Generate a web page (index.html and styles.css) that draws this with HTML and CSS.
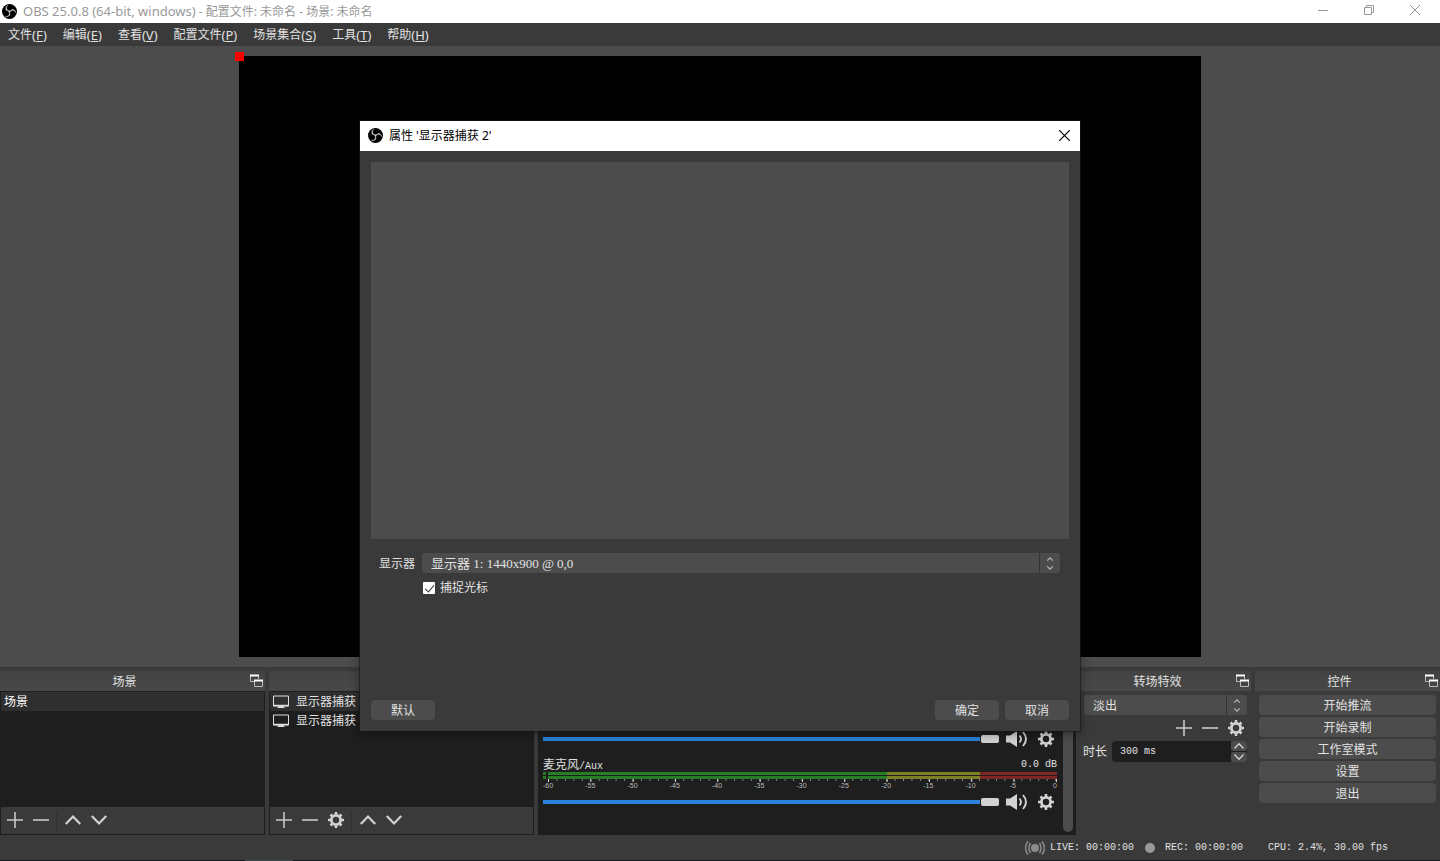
FILE: index.html
```html
<!DOCTYPE html>
<html lang="zh-CN">
<head>
<meta charset="utf-8">
<title>OBS 25.0.8</title>
<link rel="stylesheet" href="styles.css">
</head>
<body>
<svg class="sprite" aria-hidden="true">
  <symbol id="obs" viewBox="0 0 24 24"><circle cx="12" cy="12" r="12" fill="#000"/><path fill="#ddd" stroke="#ccc" stroke-width=".8" d="M6.182 5.99c.352-1.698 1.503-3.229 3.05-3.996-.269.273-.595.483-.844.78-1.02 1.1-1.48 2.692-1.199 4.156.355 2.235 2.455 4.06 4.732 4.028 1.765.079 3.485-.937 4.348-2.468 1.848.063 3.645 1.017 4.7 2.548.54.799.962 1.736.991 2.711-.342-1.295-1.202-2.446-2.375-3.095-1.135-.639-2.529-.802-3.772-.425-1.56.448-2.849 1.723-3.293 3.293-.377 1.25-.216 2.628.377 3.772-.825 1.429-2.315 2.449-3.932 2.756-1.244.261-2.551.059-3.709-.464 1.036.302 2.161.355 3.191-.011 1.381-.457 2.522-1.567 3.024-2.935.556-1.49.345-3.261-.591-4.54-.7-1.007-1.803-1.717-3.002-1.969-.38-.068-.764-.098-1.148-.134-.611-1.231-.834-2.66-.528-3.996z"/></symbol>
  <symbol id="plus" viewBox="0 0 16 16"><path d="M8 0v16M0 8h16" stroke="#c8c8c8" stroke-width="1.6"/></symbol>
  <symbol id="minus" viewBox="0 0 16 16"><path d="M0 8h16" stroke="#c8c8c8" stroke-width="1.6"/></symbol>
  <symbol id="up" viewBox="0 0 16 16"><path d="M.8 12 8 4.500 15.200 12" fill="none" stroke="#d2d2d2" stroke-width="2.200"/></symbol>
  <symbol id="down" viewBox="0 0 16 16"><path d="M.8 4 8 11.500 15.200 4" fill="none" stroke="#d2d2d2" stroke-width="2.200"/></symbol>
  <symbol id="gear" viewBox="0 0 16 16"><circle cx="8" cy="8" r="4.600" fill="none" stroke="#d2d2d2" stroke-width="2.800"/><g stroke="#d2d2d2" stroke-width="2.600"><path d="M8 0v3M8 13v3M0 8h3M13 8h3"/><path d="m2.500 2.500 2 2M11.500 11.500l2 2M13.500 2.500l-2 2M4.500 11.500l-2 2"/></g></symbol>
  <symbol id="float" viewBox="0 0 14 14"><path d="M5 7.500H1.500V1.500H9.500V5" fill="none" stroke="#bbb"/><path d="M1 1.500h9" stroke="#fff" stroke-width="2"/><path d="M5.500 6.500h8v6h-8z" fill="#454545" stroke="#bbb"/><path d="M5 6.500h9" stroke="#fff" stroke-width="2"/></symbol>
  <symbol id="monitor" viewBox="0 0 16 14"><path d="M.5 1h15v10H.5z" fill="none" stroke="#ddd"/><path d="M0 10.500h16" stroke="#ddd" stroke-width="1.500"/><path d="M6 11h4l2 2H4z" fill="#ddd"/></symbol>
  <symbol id="speaker" viewBox="0 0 22 16"><path d="M0 4.500h4L11 0v16L4 11.500H0z" fill="#d2d2d2"/><path d="M13.500 4.500q3 3.500 0 7M17 1q6 7 0 14" fill="none" stroke="#d2d2d2" stroke-width="1.900"/></symbol>
  <symbol id="spinpair" viewBox="0 0 8 16"><path d="M1 5 4 2l3 3M1 11l3 3 3-3" fill="none" stroke="#bbb" stroke-width="1.200"/></symbol>
</svg>

<header class="titlebar">
  <svg class="logo"><use href="#obs"/></svg>
  <h1 class="title"><span class="latin">OBS 25.0.8 (64-bit, windows)</span> - 配置文件: 未命名 - 场景: 未命名</h1>
  <div class="window-buttons">
    <button aria-label="最小化"><svg viewBox="0 0 10 10"><path d="M0 5.500h10" stroke="#999"/></svg></button>
    <button aria-label="还原"><svg viewBox="0 0 10 10"><path d="M.5 2.500h7v7h-7zM2.500 2V.5h7v7H8" fill="none" stroke="#999"/></svg></button>
    <button aria-label="关闭"><svg viewBox="0 0 10 10"><path d="m0 0 10 10M10 0 0 10" stroke="#999"/></svg></button>
  </div>
</header>

<nav class="menubar">
  <button>文件<span class="latin">(<u>F</u>)</span></button><button>编辑<span class="latin">(<u>E</u>)</span></button><button>查看<span class="latin">(<u>V</u>)</span></button><button>配置文件<span class="latin">(<u>P</u>)</span></button><button>场景集合<span class="latin">(<u>S</u>)</span></button><button>工具<span class="latin">(<u>T</u>)</span></button><button>帮助<span class="latin">(<u>H</u>)</span></button>
</nav>

<main class="preview"><div class="canvas"><span class="handle"></span></div></main>

<section class="docks">
  <article class="dock">
    <header class="dock-head"><h2>场景</h2><button aria-label="浮动"><svg><use href="#float"/></svg></button></header>
    <div class="box">
      <ul class="list"><li class="row selected scene">场景</li></ul>
      <div class="tools">
        <button aria-label="添加"><svg><use href="#plus"/></svg></button>
        <button aria-label="移除"><svg><use href="#minus"/></svg></button>
        <span class="sep"></span>
        <button aria-label="上移"><svg><use href="#up"/></svg></button>
        <button aria-label="下移"><svg><use href="#down"/></svg></button>
      </div>
    </div>
  </article>

  <article class="dock">
    <header class="dock-head"></header>
    <div class="box">
      <ul class="list">
        <li class="row selected"><svg class="monitor"><use href="#monitor"/></svg>显示器捕获</li>
        <li class="row"><svg class="monitor"><use href="#monitor"/></svg>显示器捕获</li>
      </ul>
      <div class="tools">
        <button aria-label="添加"><svg><use href="#plus"/></svg></button>
        <button aria-label="移除"><svg><use href="#minus"/></svg></button>
        <button aria-label="属性"><svg><use href="#gear"/></svg></button>
        <span class="sep"></span>
        <button aria-label="上移"><svg><use href="#up"/></svg></button>
        <button aria-label="下移"><svg><use href="#down"/></svg></button>
      </div>
    </div>
  </article>

  <article class="dock">
    <header class="dock-head"></header>
    <div class="mixer">
      <div class="channels">
        <div class="volume">
          <input type="range" value="100" aria-label="音量">
          <button class="mute" aria-label="静音"><svg><use href="#speaker"/></svg></button>
          <button class="cog" aria-label="设置"><svg><use href="#gear"/></svg></button>
        </div>
        <div class="channel-head"><label for="mic">麦克风<span class="mono">/Aux</span></label><span class="mono">0.0 dB</span></div>
        <div class="meter"><i></i><b></b><i></i><b></b></div>
        <div class="ticks"></div>
        <div class="scale"><span>-60</span><span>-55</span><span>-50</span><span>-45</span><span>-40</span><span>-35</span><span>-30</span><span>-25</span><span>-20</span><span>-15</span><span>-10</span><span>-5</span><span>0</span></div>
        <div class="volume">
          <input id="mic" type="range" value="100">
          <button class="mute" aria-label="静音"><svg><use href="#speaker"/></svg></button>
          <button class="cog" aria-label="设置"><svg><use href="#gear"/></svg></button>
        </div>
      </div>
      <div class="scrollbar"></div>
    </div>
  </article>

  <article class="dock">
    <header class="dock-head"><h2>转场特效</h2><button aria-label="浮动"><svg><use href="#float"/></svg></button></header>
    <div class="panel">
      <div class="combo"><select aria-label="转场特效"><option>淡出</option></select><svg><use href="#spinpair"/></svg></div>
      <div class="tools end">
        <button aria-label="添加"><svg><use href="#plus"/></svg></button>
        <button aria-label="移除"><svg><use href="#minus"/></svg></button>
        <button aria-label="属性"><svg><use href="#gear"/></svg></button>
      </div>
      <div class="duration">
        <label for="duration">时长</label>
        <div class="spin">
          <input id="duration" type="text" value="300 ms">
          <div class="steps"><button aria-label="增加"><svg><use href="#up"/></svg></button><button aria-label="减少"><svg><use href="#down"/></svg></button></div>
        </div>
      </div>
    </div>
  </article>

  <article class="dock">
    <header class="dock-head"><h2>控件</h2><button aria-label="浮动"><svg><use href="#float"/></svg></button></header>
    <div class="panel controls">
      <button class="btn">开始推流</button><button class="btn">开始录制</button><button class="btn">工作室模式</button><button class="btn">设置</button><button class="btn">退出</button>
    </div>
  </article>
</section>

<footer class="status mono">
  <span class="live"><svg viewBox="0 0 20 14"><circle cx="10" cy="7" r="4" fill="#8c8c8c"/><path d="M5.500 2q-3 5 0 10M14.500 2q3 5 0 10M3 .5q-5 6.500 0 13M17 .5q5 6.500 0 13" fill="none" stroke="#8c8c8c" stroke-width="1.500"/></svg>LIVE: 00:00:00</span>
  <span class="rec"><i></i>REC: 00:00:00</span>
  <span>CPU: 2.4%, 30.00 fps</span>
</footer>
<div class="taskbar"><span></span></div>

<dialog open class="dialog" aria-labelledby="dialog-title">
  <header class="dialog-head">
    <svg class="logo"><use href="#obs"/></svg>
    <h2 id="dialog-title">属性 '显示器捕获 2'</h2>
    <button aria-label="关闭"><svg viewBox="0 0 10 10"><path d="m0 0 10 10M10 0 0 10" stroke="#000" stroke-width="1.100"/></svg></button>
  </header>
  <div class="dialog-body">
    <div class="dialog-preview"></div>
    <form class="form">
      <label for="display">显示器</label>
      <div class="combo wide"><select id="display"><option>显示器 1: 1440x900 @ 0,0</option></select><svg><use href="#spinpair"/></svg></div>
      <label class="check"><input type="checkbox" checked><span>捕捉光标</span></label>
    </form>
    <div class="actions"><button class="btn">默认</button><button class="btn ok">确定</button><button class="btn">取消</button></div>
  </div>
</dialog>
</body>
</html>
```
FILE: styles.css
```css
* { box-sizing: border-box; }
body {
  margin: 0;
  min-height: 100vh;
  display: flex;
  flex-direction: column;
  position: relative;
  background: #3a3a3a;
  color: #e1e1e1;
  font: 12px/18px "Liberation Sans", "Noto Sans CJK SC", sans-serif;
}
h1, h2, ul { margin: 0; padding: 0; font: inherit; }
ul { list-style: none; }
button, input, select { font: inherit; color: inherit; margin: 0; }
button { background: none; border: 0; padding: 0; display: flex; align-items: center; justify-content: center; }
svg { display: block; }
.sprite { position: absolute; width: 0; height: 0; }
.mono, .spin input { font-family: "Liberation Mono", monospace; font-size: 10px; }
.latin { font-size: 13px; }

.titlebar { display: flex; align-items: center; height: 23px; padding-left: 2px; gap: 6px; background: #fff; color: #999; }
.logo { width: 15px; height: 15px; flex: none; }
.title { font-family: "Noto Sans", "Noto Sans CJK SC", sans-serif; }
.window-buttons { margin-left: auto; display: flex; align-self: flex-start; padding-right: 2px; }
.window-buttons button { width: 46px; height: 20px; }
.window-buttons svg { width: 10px; height: 10px; }

.menubar { display: flex; height: 23px; background: #3a3a3a; font-family: "Noto Sans", "Noto Sans CJK SC", sans-serif; }
.menubar button { padding: 0 8px; }
.menubar u { text-underline-offset: 1px; }

.preview { flex: 1; min-height: 200px; display: flex; justify-content: center; padding: 10px; background: #4c4c4c; }
.canvas { position: relative; width: 67.7%; background: #000; }
.handle { position: absolute; left: -4px; top: -4px; width: 9px; height: 9px; background: #f00; }

.docks { display: grid; grid-template-columns: 265fr 265fr 538fr 171fr 185fr; gap: 4px; padding-top: 4px; }
.dock { display: flex; flex-direction: column; min-width: 0; }
.dock-head { display: flex; align-items: center; height: 20px; padding-right: 2px; background: linear-gradient(#434343, #484848); }
.dock-head h2 { flex: 1; padding-top: 2px; text-align: center; }
.dock-head button, .dock-head svg { width: 14px; height: 14px; }
.box { flex: 1; display: flex; flex-direction: column; border: 1px solid #1e1e1e; }
.list { flex: 1; min-height: 115px; background: #1e1e1e; }
.row { display: flex; align-items: center; height: 19px; padding-left: 3px; gap: 7px; }
.scene { color: #fff; }
.selected { background: #2f2f2f; }
.monitor { width: 16px; height: 14px; }
.tools { display: flex; align-items: center; height: 27px; padding: 0 0 1px 1px; }
.tools button { width: 26px; height: 26px; }
.tools svg { width: 16px; height: 16px; }
.sep { width: 6px; height: 19px; background: linear-gradient(#303030, #303030) 2px 0 / 1px 100% no-repeat; }

.mixer { flex: 1; display: flex; gap: 6px; padding: 0 3px 0 5px; background: #1e1e1e; }
.channels { flex: 1; display: flex; flex-direction: column; justify-content: flex-end; padding-bottom: 24px; }
.scrollbar { width: 10px; margin-bottom: 3px; border-radius: 5px; background: #4c4c4c; }
.volume { display: flex; align-items: center; height: 18px; padding-right: 3px; }
.volume input { flex: 1; min-width: 0; height: 10px; appearance: none; background: linear-gradient(#2a82da, #2a82da) 0 3px / 100% 4px no-repeat; border-radius: 2px; }
.volume input::-webkit-slider-thumb { appearance: none; width: 20px; height: 10px; border: 1px solid #1e1e1e; border-radius: 3px; background: #d2d2d2; }
.mute, .mute svg { width: 22px; height: 16px; }
.mute { margin: 0 10px 0 6px; }
.cog, .cog svg { width: 16px; height: 16px; }
.channel-head { display: flex; justify-content: space-between; height: 14px; margin: 9px 0 1px; line-height: 16px; }
.channel-head .mono { line-height: 16px; }
.meter { display: grid; grid-template-columns: 3px 1fr; gap: 1px 2px; grid-auto-rows: 3px; }
.meter i { background: #267f26; }
.meter b { background: linear-gradient(to right, #267f26 66.6%, #7f7f26 66.6% 84.9%, #7f2626 84.9%); }
.ticks {
  height: 3px;
  margin-left: 5px;
  background:
    linear-gradient(to right, #ddd 1px, transparent 1px) 0 0 / calc((100% - 1px) / 12) 3px repeat-x,
    linear-gradient(to right, #888 1px, transparent 1px) 0 0 / calc((100% - 1px) / 60) 2px repeat-x;
}
.scale { display: flex; justify-content: space-between; height: 8px; margin: 0 2px 3px 5px; font-size: 7px; line-height: 8px; color: #bbb; }
.scale span { width: 0; display: flex; justify-content: center; }

.panel { padding: 4px; display: flex; flex-direction: column; }
.combo { display: flex; align-items: center; position: relative; height: 20px; }
.combo select { appearance: none; width: 100%; height: 20px; padding: 1px 24px 0 9px; border: 0; border-radius: 3px; background: linear-gradient(#323232, #323232) right 20px top 0 / 1px 100% no-repeat #4c4c4c; }
.combo svg { position: absolute; right: 6px; top: 3px; width: 8px; height: 15px; pointer-events: none; }
.wide select { font: 13px/18px "Liberation Serif", "Noto Sans CJK SC", serif; }
.end { justify-content: flex-end; height: 26px; margin-right: -2px; padding-bottom: 0; }
.duration { display: flex; align-items: center; gap: 5px; height: 21px; margin-left: -1px; }
.duration label { flex: none; padding-top: 1px; }
.spin { flex: 1; min-width: 0; display: flex; height: 21px; border-radius: 4px; background: #1e1e1e; overflow: hidden; }
.spin input { flex: 1; min-width: 0; padding: 0 8px; border: 0; background: none; }
.steps { display: flex; flex-direction: column; gap: 1px; width: 16px; }
.steps button { flex: 1; background: #4c4c4c; border-radius: 2px; }
.steps svg { width: 10px; height: 10px; }
.controls { gap: 2px; }
.btn { height: 20px; padding-top: 2px; border-radius: 4px; background: #4c4c4c; }

.status { display: flex; justify-content: flex-end; height: 25px; padding: 1px 52px 0 0; white-space: pre; }
.status span { display: flex; align-items: center; }
.live svg { width: 20px; height: 14px; margin-right: 5px; }
.rec { margin: 0 25px 0 11px; }
.rec i { width: 10px; height: 10px; margin-right: 10px; border-radius: 50%; background: #999; }
.taskbar { height: 1px; padding-left: 17%; background: #111a20; }
.taskbar span { display: block; width: 48px; height: 1px; background: #3c484e; }

.dialog { position: absolute; top: 121px; left: 25%; width: 50%; margin: 0; padding: 0; border: 0; background: #3a3a3a; color: inherit; box-shadow: 0 2px 10px rgba(0, 0, 0, .45), 0 0 0 1px rgba(30, 30, 30, .6); }
.dialog-head { display: flex; align-items: center; height: 30px; padding: 0 10px 2px 8px; background: #fff; color: #000; font-family: "Noto Sans", "Noto Sans CJK SC", sans-serif; }
.dialog-head h2 { margin-left: 6px; padding-top: 1px; }
.dialog-head button { margin-left: auto; }
.dialog-head button svg { width: 11px; height: 11px; }
.dialog-body { padding: 11px; }
.dialog-preview { height: 377px; background: #4c4c4c; }
.form { display: grid; grid-template-columns: auto 1fr; gap: 5px 7px; padding: 14px 9px 0 8px; min-height: 161px; align-content: start; align-items: center; }
.form label { padding-top: 1px; }
.check { grid-column: 2; display: flex; align-items: center; gap: 5px; }
.check input { appearance: none; width: 12px; height: 12px; margin-left: 1px; border-radius: 1px; background: #fff; position: relative; }
.check input:checked::after { content: ""; position: absolute; left: 4px; top: 1px; width: 4px; height: 8px; border: solid #333; border-width: 0 1px 1px 0; transform: rotate(40deg); }
.actions { display: flex; gap: 6px; }
.actions .btn { width: 64px; }
.ok { margin-left: auto; }
```
